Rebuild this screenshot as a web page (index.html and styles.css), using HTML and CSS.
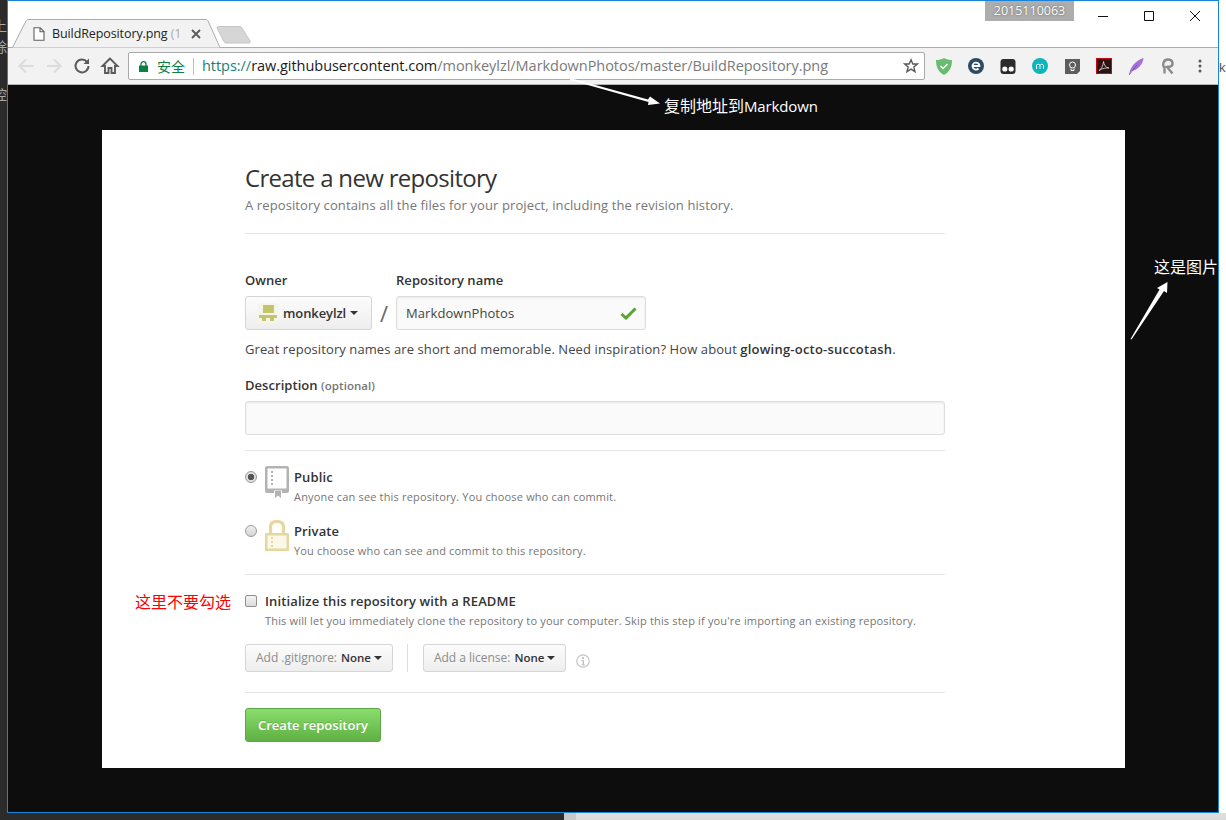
FILE: index.html
```html
<!DOCTYPE html>
<html lang="en">
<head>
<meta charset="utf-8">
<title>BuildRepository.png</title>
<link rel="stylesheet" href="styles.css">
</head>
<body>
<div class="desk-left">
  <span class="desk-glyph g1">上</span>
  <span class="desk-glyph g2">除</span>
  <span class="desk-glyph g3">控</span>
</div>
<div class="desk-right"><span class="desk-ko">ko</span></div>
<div class="desk-bottom"><div class="db-dark"></div><div class="db-mid"></div><div class="db-light"></div></div>

<div class="window">
  <div class="tabstrip">
    <svg class="tab-shape" width="216" height="30" viewBox="0 0 216 30">
      <path d="M0 28.5H4.5L18 2C18.5 1 19 .5 20 .5H198C199 .5 199.5 1 200 2L212 28.5H216" fill="#f2f2f2" stroke="#acacac" stroke-width="1"/>
      <path d="M5 29H211V30H5z" fill="#f2f2f2"/>
    </svg>
    <div class="tab">
      <svg class="tab-file" width="12" height="14" viewBox="0 0 12 14"><path d="M1 .7H7.2L11 4.5V13.3H1zM7 .7V4.7H11" fill="#fff" stroke="#5f5f5f" stroke-width="1.1"/></svg>
      <span class="tab-title">BuildRepository.png <span class="tab-fade">(1</span></span>
      <svg class="tab-close" width="10" height="10" viewBox="0 0 10 10"><path d="M1 1L9 9M9 1L1 9" stroke="#5a5a5a" stroke-width="1.8"/></svg>
    </div>
    <svg class="newtab" width="36" height="19" viewBox="0 0 36 19"><path d="M1 2C1 1 1.5.5 2.500.5H24C25 .5 25.500 1 26 2L34 15C34.500 16.500 34 17 33 17H10C9 17 8.500 16.500 8 15.500z" fill="#d6d6d6" stroke="#c4c4c4"/></svg>
    <div class="id-badge">2015110063</div>
    <div class="caption">
      <svg class="cap-btn" width="46" height="30" viewBox="0 0 46 30"><path d="M18 15.500H28" stroke="#111"/></svg>
      <svg class="cap-btn" width="46" height="30" viewBox="0 0 46 30"><path d="M18.500 10.500H27.500V19.500H18.500z" fill="none" stroke="#111"/></svg>
      <svg class="cap-btn" width="46" height="30" viewBox="0 0 46 30"><path d="M18 10L28 20M28 10L18 20" stroke="#111"/></svg>
    </div>
  </div>

  <div class="toolbar">
    <div class="nav">
      <svg class="nav-btn" width="28" height="28" viewBox="0 0 28 28"><path d="M21.500 14H8M14 7.500L7.500 14L14 20.500" fill="none" stroke="#dcdcdc" stroke-width="2"/></svg>
      <svg class="nav-btn" width="28" height="28" viewBox="0 0 28 28"><path d="M7 14H20.500M14 7.500L20.500 14L14 20.500" fill="none" stroke="#dcdcdc" stroke-width="2"/></svg>
      <svg class="nav-btn" width="28" height="28" viewBox="0 0 28 28"><path d="M19.200 10A6.500 6.500 0 1 0 20.500 14" fill="none" stroke="#5a5a5a" stroke-width="2"/><path d="M21 6.500V12H15.500z" fill="#5a5a5a"/></svg>
      <svg class="nav-btn" width="28" height="28" viewBox="0 0 28 28"><path d="M14 6.500L6.500 14H9V21H12.500V16H15.500V21H19V14H21.500z" fill="none" stroke="#5a5a5a" stroke-width="1.900"/></svg>
    </div>
    <div class="omnibox">
      <svg class="omni-lock" width="9" height="11" viewBox="0 0 9 11"><path d="M2 5V3.200A2.500 2.500 0 0 1 7 3.200V5" fill="none" stroke="#0b8043" stroke-width="1.300"/><path d="M0 4.500H9V11H0z" fill="#0b8043"/></svg>
      <span class="omni-secure">安全</span>
      <span class="omni-sep"></span>
      <span class="omni-url"><span class="url-scheme">https://</span><span class="url-host">raw.githubusercontent.com</span><span class="url-path">/monkeylzl/MarkdownPhotos/master/BuildRepository.png</span></span>
      <svg class="omni-star" width="16" height="16" viewBox="0 0 16 16"><path d="M8 1.800L9.800 6H14.400L10.800 9L12 13.700L8 11.200L4 13.700L5.200 9L1.600 6H6.200z" fill="none" stroke="#5a5a5a" stroke-width="1.400"/></svg>
    </div>
    <div class="exts">
      <span class="ext"><svg width="16" height="17" viewBox="0 0 16 17"><path d="M8 0C10.500 1.500 13 2 16 2C16 9 13.500 14 8 17C2.500 14 0 9 0 2C3 2 5.500 1.500 8 0z" fill="#68bc71"/><path d="M4.500 8L7 10.500L11.500 6" fill="none" stroke="#fff" stroke-width="1.500"/></svg></span>
      <span class="ext"><svg width="16" height="16" viewBox="0 0 16 16"><circle cx="8" cy="8" r="8" fill="#2c4a63"/><path d="M4.500 8H11.500A3.500 3.500 0 1 0 10.500 10.500" fill="none" stroke="#fff" stroke-width="1.800"/></svg></span>
      <span class="ext"><svg width="16" height="15" viewBox="0 0 16 15"><rect width="15" height="15" x=".5" rx="3" fill="#2b2b2b"/><circle cx="4.800" cy="10" r="2.600" fill="#fff"/><circle cx="11.200" cy="10" r="2.600" fill="#fff"/></svg></span>
      <span class="ext"><svg width="16" height="16" viewBox="0 0 16 16"><circle cx="8" cy="8" r="8" fill="#0fb5ba"/><path d="M4.500 11V6.500M4.500 7.500C5 5.800 7.800 5.800 8 7.500V11M8 7.500C8.300 5.800 11.500 5.800 11.500 7.500V11" fill="none" stroke="#fff" stroke-width=".9"/></svg></span>
      <span class="ext"><svg width="15" height="15" viewBox="0 0 15 15"><path d="M0 0H15V12L12 15H0z" fill="#5d5d5d"/><circle cx="7.500" cy="6" r="3" fill="none" stroke="#fff"/><path d="M6 9.500V11.500H9V9.500" fill="none" stroke="#fff"/></svg></span>
      <span class="ext"><svg width="16" height="16" viewBox="0 0 16 16"><rect x=".5" y=".5" width="15" height="15" fill="#2a1215" stroke="#c4081a"/><path d="M3 12.500C5.500 11 7 8 7.500 3.500C8 7 9.500 9.500 13 10C10 9.700 6.500 10.200 3 12.500z" fill="none" stroke="#d9c7c7" stroke-width=".9"/></svg></span>
      <span class="ext"><svg width="16" height="17" viewBox="0 0 16 17"><path d="M1 17C2 9 8 2 15.500 0C15 6 10 12 3.500 13z" fill="#a56fd8"/><path d="M1 17L9 7" stroke="#6c3fa8" stroke-width=".7"/></svg></span>
      <span class="ext"><svg width="14" height="16" viewBox="0 0 14 16"><path d="M3.500 15.500V10C1.500 8 1.500 1.500 7 1.500C12.500 1.500 12.500 7.500 9.500 8.500L6 9L11.500 15.500" fill="none" stroke="#8b8b8b" stroke-width="2.400"/></svg></span>
      <span class="ext"><svg width="4" height="14" viewBox="0 0 4 14"><circle cx="2" cy="2" r="1.500" fill="#5a5a5a"/><circle cx="2" cy="7" r="1.500" fill="#5a5a5a"/><circle cx="2" cy="12" r="1.500" fill="#5a5a5a"/></svg></span>
    </div>
  </div>

  <div class="viewer">
    <main class="shot">
      <div class="form">
        <h1 class="title">Create a new repository</h1>
        <p class="subtitle">A repository contains all the files for your project, including the revision history.</p>
        <hr class="rule rule-head">

        <div class="owner-row">
          <div class="owner-col">
            <div class="label">Owner</div>
            <div class="owner-btn">
              <svg class="avatar" width="20" height="20" viewBox="0 0 20 20"><rect width="20" height="20" fill="#f5f5ec"/><path d="M5 2H16V10H5zM1 12H19V15H1zM4 15H8V18H4zM12 15H16V18H12z" fill="#c3c56a"/></svg>
              <span class="owner-name">monkeylzl</span><span class="caret"></span>
            </div>
          </div>
          <div class="slash">/</div>
          <div class="name-col">
            <div class="label">Repository name</div>
            <div class="text-input name-input">
              <span>MarkdownPhotos</span>
              <svg width="17" height="13" viewBox="0 0 17 13"><path d="M1.500 7L6 11L15.500 1.500" fill="none" stroke="#55a532" stroke-width="3"/></svg>
            </div>
          </div>
        </div>
        <p class="hint">Great repository names are short and memorable. Need inspiration? How about <strong>glowing-octo-succotash</strong>.</p>

        <div class="label label-desc">Description <span class="optional">(optional)</span></div>
        <div class="text-input desc-input"></div>
        <hr class="rule rule-desc">

        <div class="option option-public">
          <span class="radio radio-on"></span>
          <svg class="option-icon" width="24" height="32" viewBox="0 0 24 32"><path fill-rule="evenodd" d="M2 0H22C23 0 24 1 24 2V25C24 26 23 27 22 27H17V24.500H21.500V2.500H2.500V22.500H21.500V24.500H9V27H2C1 27 0 26 0 25V2C0 1 1 0 2 0z" fill="#b3b3b3"/><path d="M10 25H16V32L13 29.500L10 32z" fill="#b3b3b3"/><path d="M6 5H8V7H6zM6 9H8V11H6zM6 13H8V15H6zM6 17H8V19H6z" fill="#b3b3b3"/></svg>
          <div class="option-text">
            <div class="option-title">Public</div>
            <div class="option-desc">Anyone can see this repository. You choose who can commit.</div>
          </div>
        </div>
        <div class="option option-private">
          <span class="radio"></span>
          <svg class="option-icon" width="24" height="31" viewBox="0 0 24 31"><path d="M5.500 13V7C5.500 3 8 1.500 12 1.500C16 1.500 18.500 3 18.500 7V13" fill="none" stroke="#e6d79f" stroke-width="3.200"/><path d="M1 13H23C23.500 13 24 13.500 24 14V30C24 30.500 23.500 31 23 31H1C.5 31 0 30.500 0 30V14C0 13.500 .5 13 1 13z" fill="#e6d79f"/><path d="M2.500 15.500H21.500V28.500H2.500z" fill="#fbf8ea"/><path d="M6 17H8V19H6zM6 21H8V23H6zM6 25H8V27H6z" fill="#e6d79f"/></svg>
          <div class="option-text">
            <div class="option-title">Private</div>
            <div class="option-desc">You choose who can see and commit to this repository.</div>
          </div>
        </div>
        <hr class="rule rule-opt">

        <div class="init">
          <span class="checkbox"></span>
          <div class="option-text">
            <div class="option-title">Initialize this repository with a README</div>
            <div class="option-desc">This will let you immediately clone the repository to your computer. Skip this step if you're importing an existing repository.</div>
          </div>
        </div>

        <div class="selects">
          <div class="select-btn"><span class="sel-key">Add .gitignore:</span><b class="sel-val">None</b><span class="caret caret-sel"></span></div>
          <span class="sel-sep"></span>
          <div class="select-btn"><span class="sel-key">Add a license:</span><b class="sel-val">None</b><span class="caret caret-sel"></span></div>
          <svg class="info" width="14" height="14" viewBox="0 0 14 14"><circle cx="7" cy="7" r="6.200" fill="none" stroke="#c4c4c4" stroke-width="1.200"/><path d="M6 3H8V5H6zM5.500 6H8V10.500H9V11.500H5.500V10.500H6.500V7H5.500z" fill="#c4c4c4"/></svg>
        </div>
        <hr class="rule rule-sel">
        <button class="create" type="button">Create repository</button>
      </div>
    </main>
  </div>
</div>

<svg class="arrows" width="1226" height="820" viewBox="0 0 1226 820">
  <path d="M570 78L648 99.500L650 96.500L660 103.500L648 105L648.500 102L570 80z" fill="#fff"/>
  <path d="M1130.500 339L1159.500 289.500L1157 288L1167.500 282L1167 293L1164 291L1131.500 339.500z" fill="#fff"/>
</svg>
<div class="note note-copy">复制地址到<span class="note-latin">Markdown</span></div>
<div class="note note-pic">这是图片</div>
<div class="note note-red">这里不要勾选</div>
</body>
</html>
```

FILE: styles.css
```css
html, body {
  margin: 0;
  padding: 0;
  width: 1226px;
  height: 820px;
  overflow: hidden;
  background: #fff;
  font-family: "Open Sans", "Noto Sans CJK SC", sans-serif;
}
* { box-sizing: border-box; }

/* desktop around the window */
.desk-left {
  position: absolute;
  left: 0; top: 0;
  width: 7px; height: 820px;
  background: #2b2b2b;
  overflow: hidden;
}
.desk-glyph {
  position: absolute;
  left: -7px;
  font: 14px/16px "Noto Sans CJK SC", sans-serif;
  color: #a8a8a8;
}
.g1 { top: 17px; }
.g2 { top: 38px; }
.g3 { top: 86px; }
.desk-right {
  position: absolute;
  left: 1219px; top: 0;
  width: 7px; height: 813px;
  background: #fff;
  overflow: hidden;
}
.desk-ko {
  position: absolute;
  left: 0; top: 60px;
  font: 13px/16px "Liberation Sans", sans-serif;
  color: #555;
}
.desk-bottom {
  position: absolute;
  left: 0; top: 813px;
  width: 1226px; height: 7px;
  display: flex;
}
.db-dark { width: 564px; background: #2b2b2b; }
.db-mid { width: 12px; background: #c9c9c9; }
.db-light { flex: 1; background: linear-gradient(#e0e0e0, #dadada); }

/* browser window */
.window {
  position: absolute;
  left: 7px; top: 0;
  width: 1212px; height: 813px;
  border: 1px solid #1883d7;
  display: flex;
  flex-direction: column;
  background: #0d0d0d;
}
.tabstrip {
  position: relative;
  flex: none;
  background: #fff;
  border-bottom: 1px solid #acacac;
  height: 47px;
}
.tab-shape { position: absolute; left: 0; top: 18px; }
.tab {
  position: absolute;
  left: 25px; top: 20px;
  width: 180px; height: 26px;
  display: flex;
  align-items: center;
}
.tab-file { margin-right: 7px; flex: none; }
.tab-title {
  width: 134px;
  overflow: hidden;
  white-space: nowrap;
  font: 12.500px/16px "Open Sans", sans-serif;
  color: #222;
  letter-spacing: -0.1px;
}
.tab-fade { color: #aaa; }
.tab-close { margin-left: 5px; flex: none; }
.newtab { position: absolute; left: 208px; top: 25px; }
.id-badge {
  position: absolute;
  left: 977px; top: 0;
  width: 89px; height: 20px;
  background: #adadad;
  color: #fff;
  font: 12.500px/20px "Open Sans", sans-serif;
  text-align: center;
  text-shadow: 0 0 2px #555;
}
.caption {
  position: absolute;
  right: 0; top: 0;
  display: flex;
}
.cap-btn { display: block; }

.toolbar {
  flex: none;
  height: 37px;
  background: #f2f2f2;
  border-bottom: 1px solid #b5b5b5;
  display: flex;
  align-items: center;
  padding: 0 0 0 4px;
}
.nav { display: flex; width: 116px; flex: none; }
.nav-btn { display: block; flex: none; }
.omnibox {
  flex: none;
  width: 797px;
  height: 28px;
  background: #fff;
  border: 1px solid #a9a9a9;
  border-radius: 2px;
  display: flex;
  align-items: center;
  padding-left: 10px;
  position: relative;
}
.omni-lock { flex: none; }
.omni-secure {
  margin-left: 9px;
  font: 14px/18px "Noto Sans CJK SC", sans-serif;
  color: #0b8043;
}
.omni-sep {
  width: 1px; height: 17px;
  margin: 0 8px 0 8px;
  background: #bdbdbd;
}
.omni-url {
  font: 14.500px/20px "Open Sans", sans-serif;
  letter-spacing: -0.04px;
  white-space: nowrap;
}
.url-scheme { color: #1b7f79; }
.url-host { color: #1a1a1a; }
.url-path { color: #7a7a7a; }
.omni-star { position: absolute; right: 5px; top: 5px; }
.exts {
  display: flex;
  flex: none;
  margin-left: 3px;
}
.ext {
  width: 32px;
  height: 28px;
  display: flex;
  align-items: center;
  justify-content: center;
}

/* the photographed page */
.viewer {
  flex: 1;
  background: #0d0d0d;
  padding: 45px 93px 44px 94px;
}
.shot {
  background: #fff;
  height: 638px;
  padding: 33px 0 0 143px;
  color: #333;
}
.form { width: 700px; }
.title {
  margin: 0;
  font: 400 24px/30px "Open Sans", sans-serif;
  letter-spacing: -0.69px;
  color: #333;
}
.subtitle {
  margin: 2px 0 0;
  font: 13px/20px "Open Sans", sans-serif;
  letter-spacing: 0.11px;
  color: #767676;
}
.rule {
  margin: 0;
  height: 1px;
  border: 0;
  background: #e5e5e5;
}
.rule-head { margin-top: 18px; }
.owner-row { display: flex; margin-top: 36px; }
.label {
  font: 600 13px/20px "Open Sans", sans-serif;
  letter-spacing: 0.05px;
  color: #333;
}
.owner-btn {
  margin-top: 6px;
  width: 127px;
  height: 34px;
  display: flex;
  align-items: center;
  padding-left: 12px;
  border: 1px solid #d5d5d5;
  border-radius: 3px;
  background: linear-gradient(#fcfcfc, #eee);
}
.avatar { flex: none; margin-right: 5px; display: block; }
.owner-name {
  font: 600 13px/20px "Open Sans", sans-serif;
  letter-spacing: -0.1px;
  color: #333;
}
.caret {
  display: inline-block;
  width: 0; height: 0;
  margin-left: 4px;
  border: 4px solid transparent;
  border-top-color: #333;
  border-bottom: 0;
}
.caret-sel { margin-left: 3px; }
.slash {
  width: 24px;
  margin-top: 26px;
  text-align: center;
  font: 22px/34px "Open Sans", sans-serif;
  color: #666;
}
.text-input {
  height: 34px;
  border: 1px solid #ddd;
  border-radius: 3px;
  background: #fafafa;
  box-shadow: inset 0 1px 2px rgba(0,0,0,.075);
}
.name-input {
  margin-top: 6px;
  width: 250px;
  display: flex;
  align-items: center;
  justify-content: space-between;
  padding: 0 8px 0 9px;
  font: 13px/20px "Open Sans", sans-serif;
  letter-spacing: 0.08px;
  color: #444;
}
.hint {
  margin: 9px 0 0;
  font: 13px/20px "Open Sans", sans-serif;
  letter-spacing: 0.09px;
  color: #444;
}
.hint strong { font-weight: 600; color: #333; letter-spacing: 0.22px; }
.label-desc { margin-top: 16px; }
.optional { font-size: 11.500px; color: #767676; font-weight: 600; }
.desc-input { margin-top: 5px; }
.rule-desc { margin-top: 15px; }

.option { display: flex; position: relative; padding-left: 49px; }
.option-public { margin-top: 16px; }
.option-private { margin-top: 14px; }
.radio {
  position: absolute;
  left: 0; top: 4px;
  width: 12px; height: 12px;
  border-radius: 50%;
  border: 1px solid #9a9a9a;
  background: linear-gradient(#efefef, #d4d4d4);
}
.radio-on {
  background: radial-gradient(circle, #555 0 3px, #dedede 3.500px);
}
.option-icon { position: absolute; left: 20px; top: -1px; display: block; }
.option-title {
  font: 600 13px/20px "Open Sans", sans-serif;
  letter-spacing: 0.12px;
  color: #333;
}
.option-desc {
  font: 11px/20px "Open Sans", sans-serif;
  letter-spacing: 0.17px;
  color: #767676;
}
.rule-opt { margin-top: 13px; }
.init {
  display: flex;
  position: relative;
  margin-top: 16px;
  padding-left: 20px;
}
.checkbox {
  position: absolute;
  left: 0; top: 4px;
  width: 12px; height: 12px;
  border: 1px solid #8f8f8f;
  border-radius: 2px;
  background: linear-gradient(#f4f4f4, #dcdcdc);
}
.selects {
  display: flex;
  align-items: center;
  margin-top: 13px;
}
.select-btn {
  height: 28px;
  padding: 0 10px;
  display: flex;
  align-items: center;
  border: 1px solid #d5d5d5;
  border-radius: 3px;
  background: linear-gradient(#fcfcfc, #eee);
  font: 12px/20px "Open Sans", sans-serif;
}
.sel-key { color: #8c8c8c; letter-spacing: -0.02px; }
.sel-val { color: #333; font-weight: 600; font-size: 11.500px; margin-left: 4px; }
.sel-sep {
  width: 1px; height: 28px;
  margin: 0 15px 0 14px;
  background: #ddd;
}
.info { margin-left: 10px; margin-top: 6px; display: block; }
.rule-sel { margin-top: 20px; }
.create {
  display: block;
  margin-top: 15px;
  width: 136px;
  height: 34px;
  padding: 0;
  border: 1px solid #5aa746;
  border-radius: 3px;
  background: linear-gradient(#8add6d, #60b044);
  color: #fff;
  font: 600 13px/20px "Open Sans", sans-serif;
  letter-spacing: 0.03px;
  text-shadow: 0 -1px 0 rgba(0,0,0,.15);
}

/* annotations over the screenshot */
.arrows { position: absolute; left: 0; top: 0; pointer-events: none; }
.note {
  position: absolute;
  font: 16px/20px "Noto Sans CJK SC", sans-serif;
  white-space: nowrap;
}
.note-latin {
  font: 15px/20px "Open Sans", sans-serif;
  letter-spacing: -0.15px;
}
.note-copy { left: 664px; top: 95px; color: #fff; }
.note-pic { left: 1154px; top: 256px; color: #fff; }
.note-red { left: 135px; top: 591px; color: #f00; }
```
